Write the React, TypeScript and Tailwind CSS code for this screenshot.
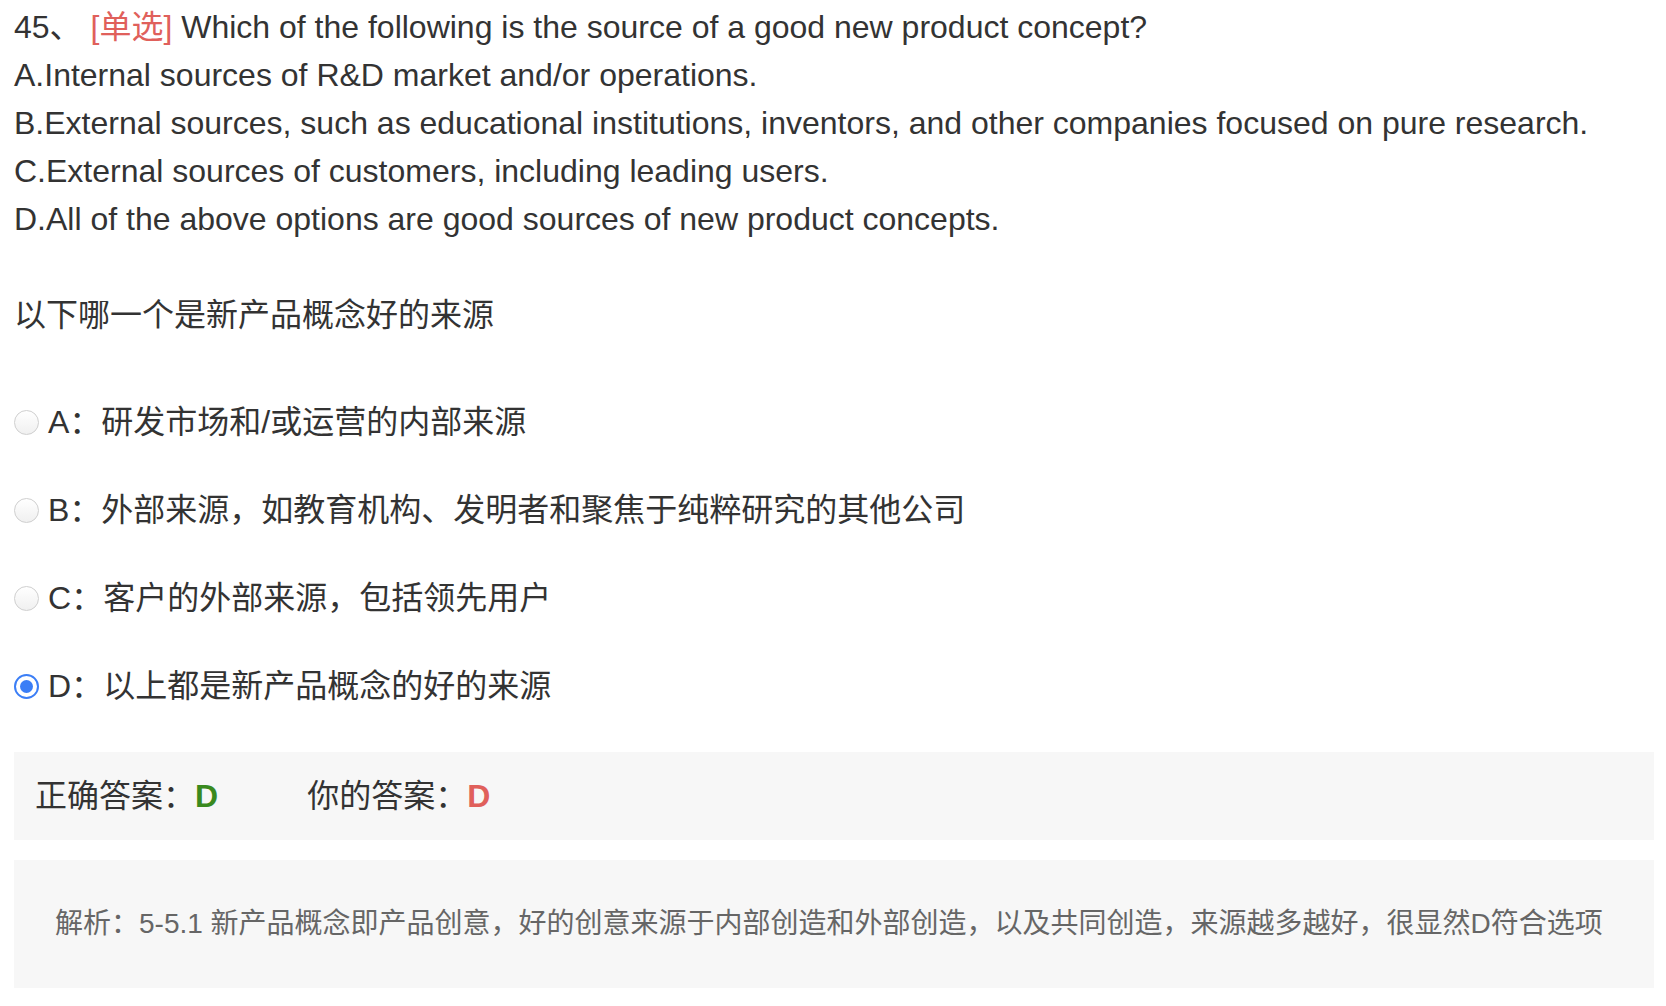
import { useState } from 'react'

const options = [
  { key: 'A', text: '研发市场和/或运营的内部来源' },
  { key: 'B', text: '外部来源，如教育机构、发明者和聚焦于纯粹研究的其他公司' },
  { key: 'C', text: '客户的外部来源，包括领先用户' },
  { key: 'D', text: '以上都是新产品概念的好的来源' },
]

export default function App() {
  const [picked, setPicked] = useState('D')

  return (
    <div
      className="min-h-screen bg-white pl-[14px] pr-[12px] pt-[3px] text-[#333]"
      style={{ fontFamily: '"Liberation Sans", Arial, "Noto Sans CJK SC", sans-serif' }}
    >
      <div className="text-[32px] leading-[48px]">
        <p>
          45、 <span className="text-[#e0605b]">[单选]</span> Which of the following is the source of a good new product concept?
        </p>
        <p>A.Internal sources of R&amp;D market and/or operations.</p>
        <p>B.External sources, such as educational institutions, inventors, and other companies focused on pure research.</p>
        <p>C.External sources of customers, including leading users.</p>
        <p>D.All of the above options are good sources of new product concepts.</p>
        <div className="h-12" />
        <p>以下哪一个是新产品概念好的来源</p>
      </div>

      <div className="mt-[39px]">
        {options.map((o) => (
          <Option key={o.key} label={o.key} text={o.text} checked={picked === o.key} onPick={() => setPicked(o.key)} />
        ))}
      </div>

      <div className="mt-[22px] flex h-[88px] items-center bg-[#f7f7f7] pl-[21px] text-[32px]">
        <span>正确答案：</span>
        <span className="font-bold text-[#3a8a1f]">D</span>
        <span className="ml-[89px]">你的答案：</span>
        <span className="font-bold text-[#e0605b]">D</span>
      </div>

      <div className="mt-[20px] flex h-[128px] items-center bg-[#f7f7f7] pl-[41px] text-[28px] text-[#666]">
        解析：5-5.1 新产品概念即产品创意，好的创意来源于内部创造和外部创造，以及共同创造，来源越多越好，很显然D符合选项
      </div>
    </div>
  )
}

function Option({ label, text, checked, onPick }: { label: string; text: string; checked: boolean; onPick: () => void }) {
  return (
    <button type="button" onClick={onPick} className="flex h-[88px] w-full cursor-pointer items-center text-left text-[32px]">
      {checked ? (
        <span className="mr-[9px] flex h-[25px] w-[25px] shrink-0 items-center justify-center rounded-full border-[2.5px] border-[#3b7ef6] bg-white">
          <span className="h-[13px] w-[13px] rounded-full bg-[#3b7ef6]" />
        </span>
      ) : (
        <span className="mr-[9px] h-[25px] w-[25px] shrink-0 rounded-full border-[1.5px] border-[#cfcfcf] bg-gradient-to-b from-white to-[#f0f0f0]" />
      )}
      <span>
        {label}：{text}
      </span>
    </button>
  )
}
